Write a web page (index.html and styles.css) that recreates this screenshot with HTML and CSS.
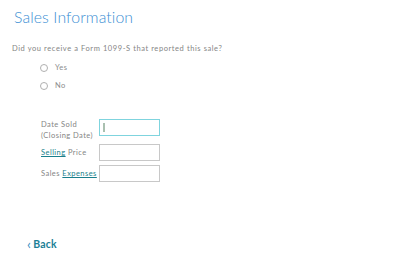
FILE: index.html
```html
<!DOCTYPE html>
<html>
<head>
<meta charset="utf-8">
<link rel="stylesheet" href="styles.css">
</head>
<body>
<div class="page">
  <h1 class="title">Sales Information</h1>
  <p class="question">Did you receive a Form 1099-S that reported this sale?</p>
  <div class="radios">
    <label class="radio"><span class="circle"></span>Yes</label>
    <label class="radio"><span class="circle"></span>No</label>
  </div>
  <div class="fields">
    <div class="field field-top">
      <div class="label">Date Sold<br>(Closing Date)</div>
      <div class="input focused"><span class="caret"></span></div>
    </div>
    <div class="field">
      <div class="label"><span class="link">Selling</span> Price</div>
      <div class="input"></div>
    </div>
    <div class="field">
      <div class="label">Sales <span class="link">Expenses</span></div>
      <div class="input"></div>
    </div>
  </div>
  <div class="back"><span class="chev">&lsaquo;</span>Back</div>
</div>
</body>
</html>
```
FILE: styles.css
```css
html, body { margin: 0; padding: 0; background: #fff; }
body { font-family: Lato, "Noto Sans", sans-serif; color: #6b6b6b; }
.page { padding: 6px 0 0 14px; }
.title { margin: 0; font-weight: 300; font-size: 15.8px; color: #3c8fd4; line-height: 22px; letter-spacing: 0.1px; }
.question { margin: 16px 0 0 -2px; font-size: 7.5px; line-height: 10px; color: #858585; letter-spacing: 0.58px; }
.radios { margin: 9px 0 0 26px; display: flex; flex-direction: column; gap: 8px; }
.radio { display: flex; align-items: center; font-size: 7.5px; line-height: 10px; color: #8c8c8c; letter-spacing: 0.5px; }
.circle { width: 6px; height: 6px; border: 1px solid #b0b0b0; border-radius: 50%; margin-right: 7px; }
.fields { margin: 28px 0 0 27px; display: flex; flex-direction: column; gap: 4px; }
.field { display: flex; align-items: center; }
.field-top { align-items: flex-start; margin-bottom: -1px; }
.label { width: 58px; font-size: 7.5px; line-height: 11px; color: #858585; letter-spacing: 0.45px; }
.link { color: #1a7f8c; text-decoration: underline; }
.input { width: 56px; height: 15px; border: 1px solid #c8c8c8; display: flex; align-items: center; padding-left: 3px; box-sizing: content-box; }
.focused { border-color: #7fd4de; }
.caret { width: 2px; height: 9px; background: #aac0b0; }
.back { margin: 56px 0 0 13px; font-weight: 700; font-size: 10.5px; color: #1b7f96; display: flex; align-items: center; letter-spacing: 0.2px; }
.chev { font-weight: 400; font-size: 14px; margin-right: 2px; line-height: 10px; color: #3b8ec0; }
```
